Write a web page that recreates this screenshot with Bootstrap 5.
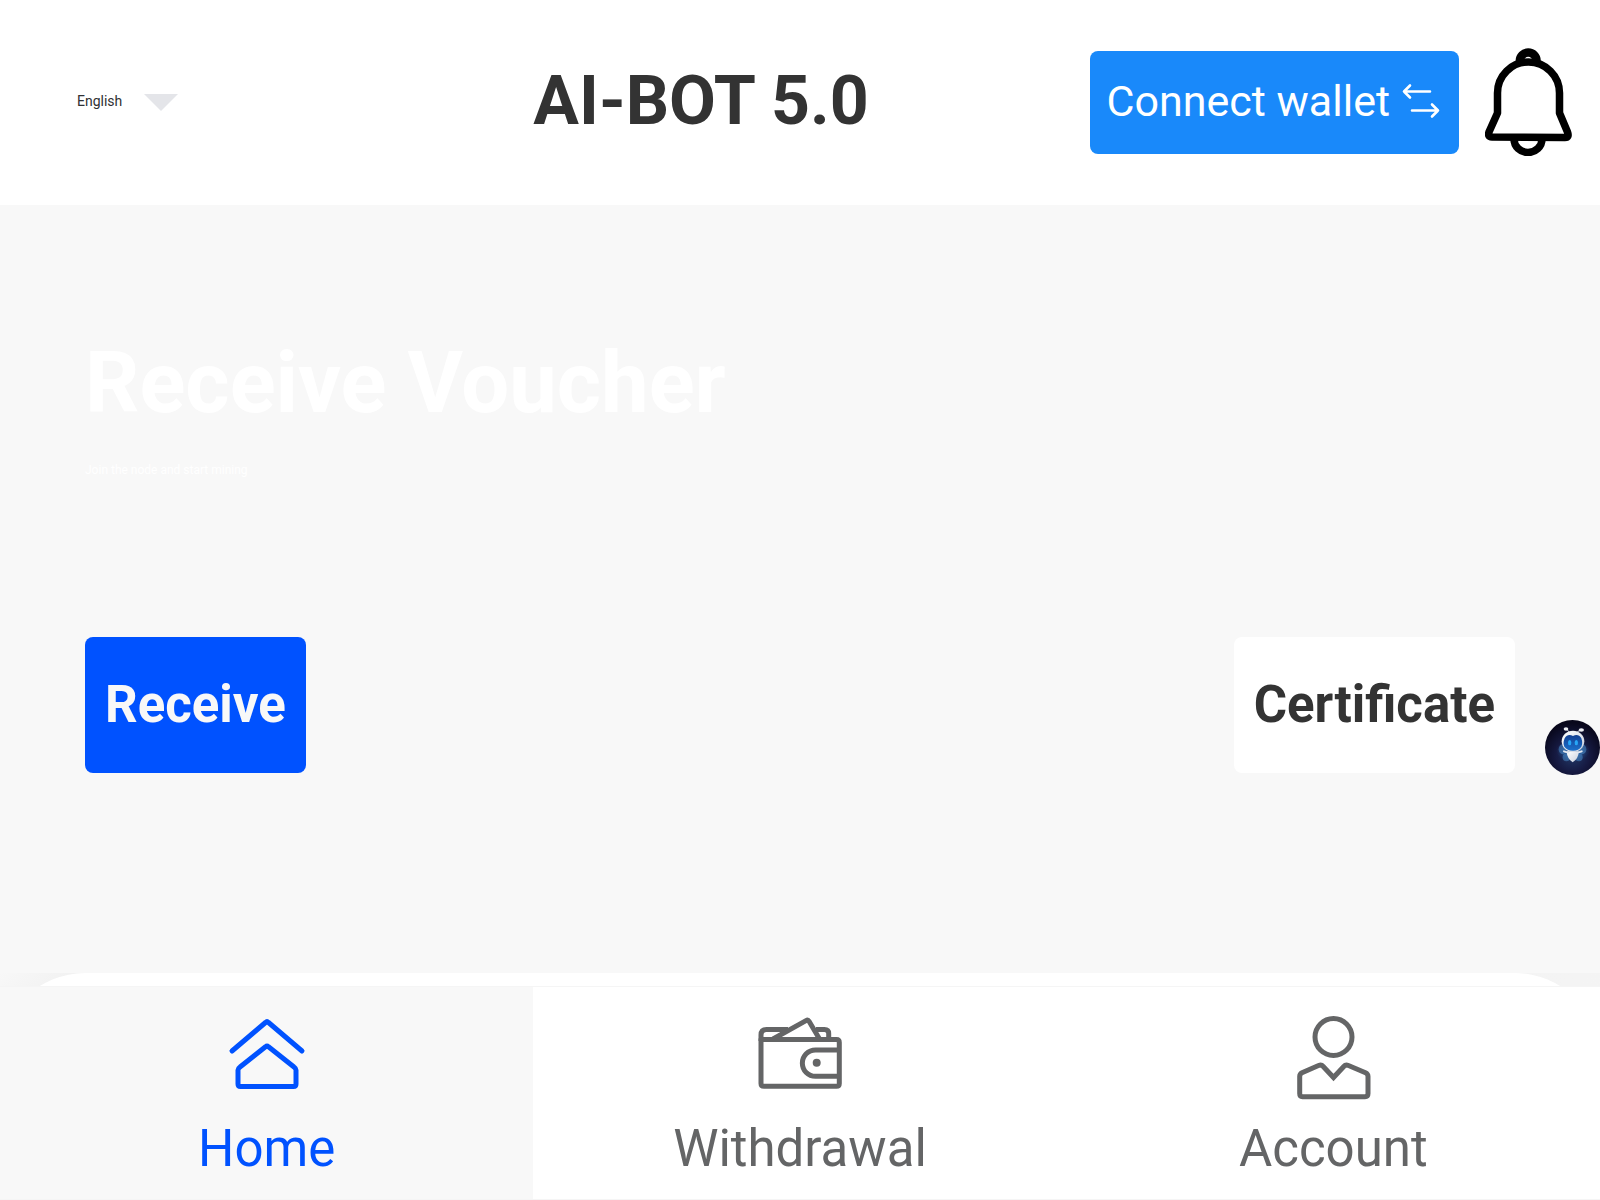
<!DOCTYPE html>
<html lang="en">
<head>
<meta charset="utf-8">
<meta name="viewport" content="width=device-width, initial-scale=1">
<title>AI-BOT 5.0</title>
<link href="https://cdn.jsdelivr.net/npm/bootstrap@5.3.0/dist/css/bootstrap.min.css" rel="stylesheet">
<style>
  body { font-family: Roboto, "Liberation Sans", sans-serif; background: #f8f8f8; color: #333; }
  .topbar { height: 205px; padding-bottom: 1px; }
  .lang { padding-left: 77px; gap: 17px; }
  .lang-select { appearance: none; border: 0; background: transparent; padding: 0 4px 2px 0; height: 28px; font-size: 14px; line-height: 24px; color: #303133; }
  .lang-caret { border: 17px solid transparent; border-top-color: #e4e5e9; border-bottom-width: 0; pointer-events: none; }
  .brand { font-size: 68px; line-height: 80px; padding-bottom: 2px; color: #333; }
  .wallet-btn { --bs-btn-color: #fff; --bs-btn-hover-color: #fff; --bs-btn-bg: #1989fa; --bs-btn-hover-bg: #0f7de9; --bs-btn-border-width: 0; --bs-btn-border-radius: 8px;
    height: 103px; padding: 0 16px 2px; font-size: 43px; line-height: 50px; gap: 10px; }
  .bell-btn { margin: 0 28px 0 26px; }
  .hero { padding: 128px 85px 200px; }
  .hero-title { font-size: 85px; line-height: 100px; margin-bottom: 29px; }
  .hero-note { font-size: 12px; line-height: 16px; margin-bottom: 159px; }
  .action { --bs-btn-border-width: 0; --bs-btn-border-radius: 8px; --bs-btn-font-weight: 700; font-size: 51px; line-height: 60px; padding: 38px 20px; }
  .action-blue { --bs-btn-color: #f8f8f8; --bs-btn-bg: #0052ff; --bs-btn-hover-color: #fff; --bs-btn-hover-bg: #0047dd; }
  .action-white { --bs-btn-color: #333; --bs-btn-bg: #fff; --bs-btn-hover-color: #333; --bs-btn-hover-bg: #f2f2f2; }
  .sheet-back { background: linear-gradient(135deg, #f8f8f8 0, #f2f2f2 50px, #f2f2f2 60%, #f5f5f5 100%); }
  .sheet { min-height: 227px; border-radius: 85px 85px 0 0; }
  .tabs { border: solid #f5f5f5; border-width: 1px 0; }
  .tab-item { padding: 28px 0 20px; gap: 18px; font-size: 51px; line-height: 60px; color: #646566; }
  .tab-item.active { color: #0052ff; background: #f8f8f8; }
  .tab-item svg { fill: none; stroke: currentColor; stroke-width: 5; stroke-linejoin: round; }
  .bot { right: 0; top: 720px; }
</style>
<script src="https://cdn.jsdelivr.net/npm/bootstrap@5.3.0/dist/js/bootstrap.bundle.min.js" defer></script>
</head>
<body>
<header class="topbar bg-white d-flex align-items-center">
  <div class="col-4 lang d-flex align-items-center">
    <select id="language" class="lang-select" aria-label="Language"><option>English</option></select>
    <span class="lang-caret"></span>
  </div>
  <h1 class="brand fw-bold m-0 text-nowrap">AI-BOT 5.0</h1>
  <button type="button" class="btn wallet-btn d-flex align-items-center ms-auto text-nowrap">Connect wallet
    <svg width="43" height="43" viewBox="0 0 43 43" fill="none" stroke="#fff" stroke-width="2.6" stroke-linecap="round" stroke-linejoin="round" aria-hidden="true"><path d="M30 11.500H4M10 5.500 4 11.500l6 6M12 30.500h26M32 24.500l6 6-6 6"/></svg>
  </button>
  <button type="button" class="btn bell-btn border-0 p-0 d-flex" aria-label="Notifications">
    <svg width="87" height="108" viewBox="0 0 87 108" fill="none" stroke="#000" stroke-width="7.500" stroke-linejoin="round" aria-hidden="true">
      <path d="M12.500 65V45a31 31 0 0 1 62 0V65L82.500 84Q84.500 89.500 80 89.500L7 89Q2 89 4.200 83.500Z"/>
      <path d="M34.800 13a8.200 8.200 0 0 1 16.800 0" stroke-width="8.500"/>
      <path d="M29 91a14 13.500 0 0 0 28 0"/>
    </svg>
  </button>
</header>

<main>
  <section class="hero">
    <h2 class="hero-title fw-bold text-white">Receive Voucher</h2>
    <p class="hero-note text-white">Join the node and start mining</p>
    <div class="d-flex justify-content-between">
      <button type="button" class="btn action action-blue">Receive</button>
      <button type="button" class="btn action action-white">Certificate</button>
    </div>
  </section>
  <div class="sheet-back"><div class="sheet bg-white"></div></div>
</main>

<a href="#assistant" class="bot position-fixed d-flex" aria-label="Assistant">
  <svg width="55" height="55" viewBox="0 0 165 165" aria-hidden="true">
    <defs>
      <radialGradient id="night" cx=".5" cy=".65" r=".6"><stop offset="0" stop-color="#203766"/><stop offset=".5" stop-color="#161a42"/><stop offset="1" stop-color="#08071b"/></radialGradient>
      <radialGradient id="glow"><stop offset="0" stop-color="#2f80cf"/><stop offset="1" stop-color="#2f80cf" stop-opacity="0"/></radialGradient>
      <linearGradient id="visor" x1="0" y1="0" x2="0" y2="1"><stop offset="0" stop-color="#123f92"/><stop offset="1" stop-color="#1b70cc"/></linearGradient>
      <linearGradient id="shell" x1="0" y1="0" x2="1" y2="1"><stop offset="0" stop-color="#fff"/><stop offset="1" stop-color="#c9d0dd"/></linearGradient>
    </defs>
    <circle cx="82.500" cy="82.500" r="82.500" fill="url(#night)"/>
    <ellipse cx="84" cy="92" rx="50" ry="34" fill="url(#glow)" opacity=".7"/>
    <g fill="#4e91cf" opacity=".5"><ellipse cx="53" cy="88" rx="12" ry="15"/><ellipse cx="112" cy="88" rx="12" ry="15"/><ellipse cx="64" cy="112" rx="11" ry="12"/><ellipse cx="102" cy="112" rx="11" ry="12"/></g>
    <path d="M74 39Q72 32 64 28M94 39Q97 33 107 31" fill="none" stroke="#c9cfdc" stroke-width="3"/>
    <ellipse cx="63" cy="27" rx="7" ry="5" fill="#eceef3"/><ellipse cx="109" cy="30" rx="8" ry="5" fill="#eceef3"/>
    <path d="M65 94H101Q101 116 83 127Q66 116 65 94Z" fill="url(#shell)"/>
    <path d="M57 94l12 4M110 94l-12 4" stroke="#e4e8f0" stroke-width="6" stroke-linecap="round"/>
    <ellipse cx="84" cy="64" rx="34" ry="32" fill="url(#shell)"/>
    <path d="M84 48Q100 40 109 55Q114 70 109 80Q101 92 84 92T58 80Q53 70 59 55Q68 40 84 48Z" fill="url(#visor)"/>
    <ellipse cx="74" cy="68" rx="5" ry="8" fill="#26a6f7"/><ellipse cx="94" cy="68" rx="5" ry="8" fill="#26a6f7"/>
  </svg>
</a>

<nav class="tabs fixed-bottom bg-white d-flex" aria-label="Main">
  <a href="#home" class="tab-item active col d-flex flex-column align-items-center text-decoration-none" aria-current="page">
    <svg width="86" height="86" viewBox="0 0 86 86" stroke-linecap="round" aria-hidden="true"><path d="M8 36 41.500 7.500Q43 6 44.500 7.500L78 36M16 52 41.500 31.800Q43 30.500 44.500 31.800L70 52Q72 53.500 72 55V69Q72 71.500 69.500 71.500H16.500Q14 71.500 14 69V55Q14 53.500 16 52Z"/></svg>
    Home
  </a>
  <a href="#withdrawal" class="tab-item col d-flex flex-column align-items-center text-decoration-none">
    <svg width="86" height="86" viewBox="0 0 86 86" aria-hidden="true">
      <path d="M4 26V20Q4 14.500 9.500 14.500H31M59 14.500H67.500Q71.700 14.500 71.700 18.500V24M16 24 49 5.600Q51 4.500 52.200 6.500L62.500 24"/>
      <path d="M4 24.500H79.500Q82.300 24.500 82.300 27.500V68.500Q82.300 71.300 79.500 71.300H7Q4 71.300 4 68.500ZM82 35H58.500a13.100 13.100 0 0 0 0 26.300H82"/>
      <circle cx="59.700" cy="47.800" r="4" fill="currentColor" stroke="none"/>
    </svg>
    Withdrawal
  </a>
  <a href="#account" class="tab-item col d-flex flex-column align-items-center text-decoration-none">
    <svg width="86" height="86" viewBox="0 0 86 86" aria-hidden="true"><circle cx="43.500" cy="22" r="18.500"/><path stroke-linejoin="miter" d="M43.500 62.500 33 51.200Q31.500 49.500 28.500 50.500L12 57.800Q9.700 59 9.700 61.500V78.500Q9.700 81.700 12.500 81.700H75Q78 81.700 78 78.500V61.500Q78 59 75.500 57.800L58.500 50.500Q55.500 49.500 54 51.200Z"/></svg>
    Account
  </a>
</nav>
</body>
</html>
